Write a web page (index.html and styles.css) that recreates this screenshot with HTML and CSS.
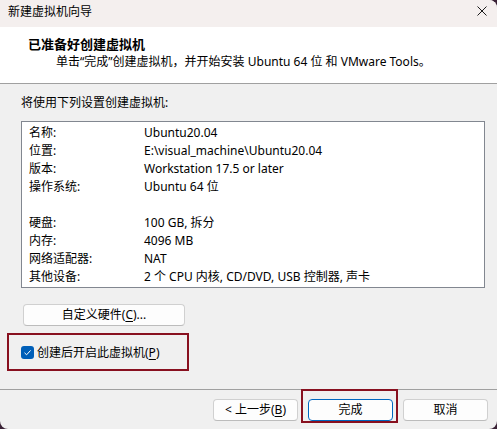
FILE: index.html
```html
<!DOCTYPE html>
<html lang="zh-CN">
<head>
<meta charset="utf-8">
<title>新建虚拟机向导</title>
<link rel="stylesheet" href="styles.css">
</head>
<body>
<div class="window">
  <div class="titlebar">
    <span class="title">新建虚拟机向导</span>
    <svg class="close" width="10" height="10" viewBox="0 0 10 10" aria-hidden="true">
      <path d="M0.5 0.5 L9.5 9.5 M9.5 0.5 L0.5 9.5" stroke="#1a1a1a" stroke-width="1" fill="none"/>
    </svg>
  </div>

  <div class="header">
    <div class="header-title">已准备好创建虚拟机</div>
    <div class="header-sub">单击“完成”创建虚拟机，并开始安装 Ubuntu 64 位 和 VMware Tools。</div>
  </div>

  <div class="content">
    <div class="intro">将使用下列设置创建虚拟机:</div>
    <div class="summary">
      <div class="row"><span>名称:</span><span>Ubuntu20.04</span></div>
      <div class="row"><span>位置:</span><span>E:\visual_machine\Ubuntu20.04</span></div>
      <div class="row"><span>版本:</span><span>Workstation 17.5 or later</span></div>
      <div class="row"><span>操作系统:</span><span>Ubuntu 64 位</span></div>
      <div class="row blank"></div>
      <div class="row"><span>硬盘:</span><span>100 GB, 拆分</span></div>
      <div class="row"><span>内存:</span><span>4096 MB</span></div>
      <div class="row"><span>网络适配器:</span><span>NAT</span></div>
      <div class="row"><span>其他设备:</span><span>2 个 CPU 内核, CD/DVD, USB 控制器, 声卡</span></div>
    </div>
    <button class="btn btn-custom">自定义硬件(<u>C</u>)...</button>
    <label class="power-on">
      <span class="checkbox">
        <svg width="13" height="13" viewBox="0 0 13 13" aria-hidden="true">
          <path d="M3.5 6.8 L5.6 8.8 L9.6 4.4" stroke="#ffffff" stroke-width="1" fill="none"/>
        </svg>
      </span>
      <span>创建后开启此虚拟机(<u>P</u>)</span>
    </label>
  </div>

  <div class="footer">
    <button class="btn">&lt; 上一步(<u>B</u>)</button>
    <span class="focus-wrap">
      <button class="btn btn-default">完成</button>
      <span class="mark"></span>
    </span>
    <button class="btn">取消</button>
  </div>
</div>
</body>
</html>
```

FILE: styles.css
```css
html {
  background: #3a2236;
}

body {
  margin: 0;
  width: 497px;
  height: 429px;
  overflow: hidden;
  font-family: "Noto Sans", "Noto Sans CJK SC", sans-serif;
  font-size: 12px;
  color: #000;
}

.window {
  width: 497px;
  height: 429px;
  background: #f0f0f0;
  border-radius: 0 8px 8px 8px;
  overflow: hidden;
  display: flex;
  flex-direction: column;
}

.titlebar {
  height: 27px;
  flex: none;
  background: #f4efee;
  display: flex;
  align-items: center;
  justify-content: space-between;
  padding: 0 10px 0 8px;
  line-height: 16px;
}

.title {
  margin-top: -3px;
}

.close {
  display: block;
  margin-top: -5px;
}

.header {
  height: 56px;
  flex: none;
  background: #fff;
  border-bottom: 1px solid #a0a0a0;
  box-sizing: content-box;
  padding: 0;
}

.header-title {
  font-weight: bold;
  font-size: 13px;
  line-height: 17px;
  padding: 9px 0 0 28px;
}

.header-sub {
  line-height: 17px;
  padding-left: 56px;
}

.content {
  padding: 10px 12px 0 21px;
  display: flex;
  flex-direction: column;
  align-items: flex-start;
}

.intro {
  line-height: 18px;
}

.summary {
  margin-top: 9px;
  align-self: stretch;
  background: #fff;
  border: 1px solid #828790;
  padding: 2px 0 1px 7px;
}

.row {
  display: grid;
  grid-template-columns: 115px 1fr;
  height: 18px;
  line-height: 18px;
  white-space: nowrap;
}

.btn {
  font: inherit;
  color: #000;
  height: 22px;
  width: 85px;
  padding: 0;
  background: #fdfdfd;
  border: 1px solid #d0d0d0;
  border-bottom-color: #bcbcbc;
  border-radius: 4px;
  line-height: 18px;
}

.btn u {
  text-underline-offset: 2px;
}

.btn-custom {
  margin: 16px 0 0 2px;
  width: 162px;
}

.power-on {
  margin: 7px 0 0 -14px;
  width: 182px;
  height: 38px;
  box-sizing: border-box;
  border: 2px solid #88101f;
  display: flex;
  align-items: center;
  padding: 1px 0 0 12px;
  gap: 3px;
  line-height: 18px;
}

.power-on u {
  text-underline-offset: 2px;
}

.checkbox {
  width: 13px;
  height: 13px;
  border-radius: 3px;
  background: #005fb8;
  display: block;
  flex: none;
}

.checkbox svg {
  display: block;
}

.footer {
  margin-top: 18px;
  border-top: 1px solid #a0a0a0;
  padding: 9px 9px 0 0;
  display: flex;
  justify-content: flex-end;
  gap: 10px;
}

.focus-wrap {
  position: relative;
  display: block;
}

.btn-default {
  display: block;
  border-color: #0067c0;
}

.mark {
  position: absolute;
  left: -7px;
  right: -5px;
  top: -10px;
  bottom: -2px;
  border: 2px solid #88101f;
  pointer-events: none;
}
```
